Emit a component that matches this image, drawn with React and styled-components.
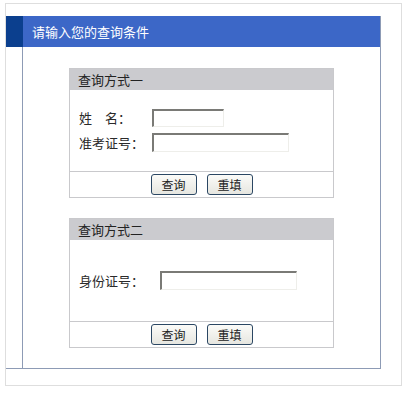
import React from "react";
import styled, { createGlobalStyle } from "styled-components";

const Global = createGlobalStyle`
  body {
    margin: 0;
    background: #fff;
    font-family: "Noto Sans CJK SC", "Noto Sans", sans-serif;
    font-size: 13px;
    color: #333;
  }
`;

const Frame = styled.div`
  margin: 3px 0 0 5px;
  width: 397px;
  height: 383px;
  border: 1px solid #dedede;
  padding-top: 12px;
  box-sizing: border-box;
`;

const Box = styled.div`
  width: 375px;
  display: grid;
  grid-template-columns: 17px 1fr;
  grid-template-rows: 31px auto;
  border-bottom: 1px solid #8d9bb5;
`;

const HeadMark = styled.div`
  background: #0b3f8e;
`;

const HeadTitle = styled.div`
  background: #3c67c7;
  color: #fff;
  font-size: 13px;
  line-height: 31px;
  padding-left: 9px;
  border-right: 1px solid #8d9bb5;
`;

const SideCell = styled.div`
  border-right: 1px solid #8d9bb5;
`;

const Main = styled.div`
  border-right: 1px solid #8d9bb5;
  display: flex;
  flex-direction: column;
  align-items: center;
  gap: 20px;
  padding: 21px 0 20px;
`;

const Panel = styled.div`
  width: 265px;
  border: 1px solid #c9c9cc;
  box-sizing: border-box;
`;

const PanelHead = styled.div`
  height: 21px;
  line-height: 21px;
  background: #cbcbcf;
  padding-left: 8px;
  color: #222;
`;

const PanelBody = styled.div`
  height: 81px;
  display: flex;
  flex-direction: column;
  justify-content: center;
  gap: 6px;
  padding-left: ${p => p.$pad}px;
  border-bottom: 1px solid #c9c9cc;
`;

const Row = styled.div`
  display: flex;
  align-items: center;
`;

const Label = styled.span`
  width: ${p => p.$w}px;
  line-height: 18px;
  color: #2a2a2a;
`;

const Input = styled.div`
  width: ${p => p.$w}px;
  height: ${p => p.$h}px;
  box-sizing: border-box;
  border-top: 2px solid #7a7a76;
  border-left: 2px solid #7a7a76;
  border-right: 1px solid #eeeeea;
  border-bottom: 1px solid #eeeeea;
  background: #fff;
`;

const Actions = styled.div`
  height: 25px;
  display: flex;
  justify-content: center;
  align-items: center;
  gap: 10px;
`;

const Button = styled.button`
  width: 46px;
  height: 21px;
  padding: 0;
  border: 1px solid #2b4763;
  border-radius: 3px;
  background: linear-gradient(#fbfbf8, #e6e6e0);
  font-family: inherit;
  font-size: 12px;
  color: #222;
  line-height: 19px;
`;

const Buttons = () => (
  <Actions>
    <Button>查询</Button>
    <Button>重填</Button>
  </Actions>
);

export default function App() {
  return (
    <>
      <Global />
      <Frame>
        <Box>
          <HeadMark />
          <HeadTitle>请输入您的查询条件</HeadTitle>
          <SideCell />
          <Main>
            <Panel>
              <PanelHead>查询方式一</PanelHead>
              <PanelBody $pad={9}>
                <Row>
                  <Label $w={73}>姓　名：</Label>
                  <Input $w={72} $h={18} />
                </Row>
                <Row>
                  <Label $w={73}>准考证号：</Label>
                  <Input $w={137} $h={19} />
                </Row>
              </PanelBody>
              <Buttons />
            </Panel>
            <Panel>
              <PanelHead>查询方式二</PanelHead>
              <PanelBody $pad={9}>
                <Row>
                  <Label $w={81}>身份证号：</Label>
                  <Input $w={137} $h={19} />
                </Row>
              </PanelBody>
              <Buttons />
            </Panel>
          </Main>
        </Box>
      </Frame>
    </>
  );
}
